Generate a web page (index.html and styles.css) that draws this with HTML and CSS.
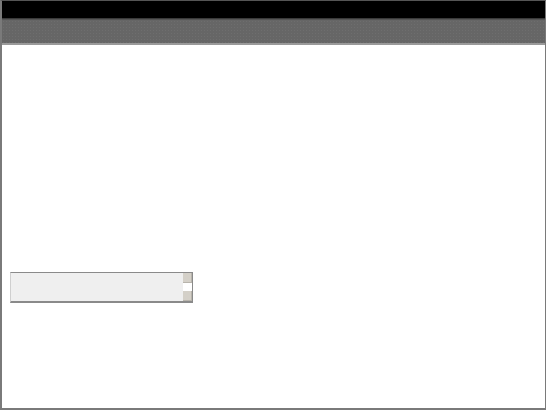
FILE: index.html
```html
<!DOCTYPE html>
<html lang="en">
<head>
    <meta charset="UTF-8">
    <title>Panel</title>
    <link rel="stylesheet" href="styles.css">
</head>
<body>
    <div class="window">
        <div class="titlebar"></div>
        <div class="toolbar"></div>
        <div class="content">
            <div class="spinbox">
                <div class="spin-field"></div>
                <div class="spin-buttons">
                    <span class="spin-btn"></span>
                    <span class="spin-gap"></span>
                    <span class="spin-btn"></span>
                </div>
            </div>
        </div>
    </div>
</body>
</html>
```

FILE: styles.css
```css
html, body {
    margin: 0;
    padding: 0;
    background: #fff;
}
.window {
    box-sizing: border-box;
    width: 546px;
    height: 410px;
    display: flex;
    flex-direction: column;
    border-top: 1px solid #555;
    border-left: 2px solid #7a7a7a;
    border-right: 1px solid #7a7a7a;
    border-bottom: 2px solid #7a7a7a;
}
.titlebar {
    height: 17px;
    background: #000;
    border-bottom: 1px solid #3a3a3a;
}
.toolbar {
    height: 23px;
    background-color: #666;
    background-image: radial-gradient(#6e6e6e 0.6px, transparent 0.8px);
    background-size: 3px 3px;
    border-top: 1px solid #555;
    border-bottom: 2px solid #9a9a9a;
}
.content {
    flex: 1;
    background: #fff;
    padding: 227px 0 0 8px;
}
.spinbox {
    display: flex;
    width: 183px;
    height: 31px;
    box-sizing: border-box;
    border-top: 1px solid #8a8a8a;
    border-left: 1px solid #cfcfcf;
    border-bottom: 2px solid #8a8a8a;
    border-right: 1px solid #8a8a8a;
    background: #efefef;
}
.spin-field {
    flex: 1;
}
.spin-buttons {
    width: 9px;
    display: flex;
    flex-direction: column;
}
.spin-btn {
    height: 10px;
    background: #d4d0c8;
    box-shadow: inset -1px -1px 0 #b8b4ac;
}
.spin-gap {
    flex: 1;
    background: #fff;
}
```
